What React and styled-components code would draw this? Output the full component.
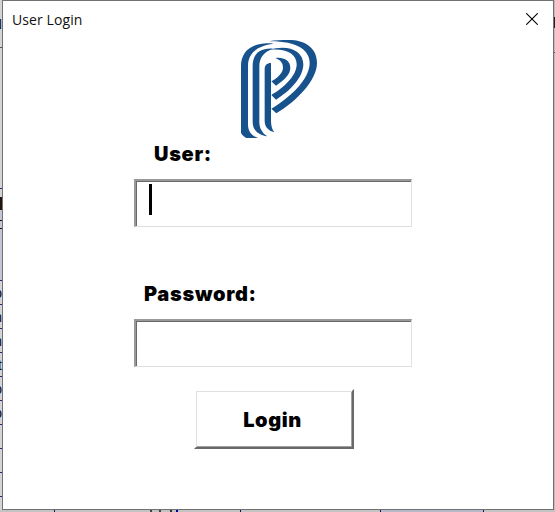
import React from "react";
import styled, { createGlobalStyle } from "styled-components";

const GlobalStyle = createGlobalStyle`
  * { box-sizing: border-box; }
  body { margin: 0; overflow: hidden; background: #d2d2d4; }
`;

const Desktop = styled.div`
  width: 555px;
  height: 512px;
  display: grid;
  grid-template-columns: 2px 552px 1px;
  grid-template-rows: 510px 2px;
  overflow: hidden;
  background: #c8c8c8;
`;

const SheetEdge = styled.div`
  display: flex;
  flex-direction: column;
  overflow: hidden;
  background: ${(p) => p.$tone || "#d3d3d8"};
`;

const SheetCell = styled.div`
  flex: 0 0 ${(p) => p.$h}px;
  display: flex;
  justify-content: flex-end;
  align-items: center;
  overflow: hidden;
  background: ${(p) => p.$bg || "transparent"};
  border-bottom: 1px solid ${(p) => p.$line || "#25257c"};
  font: 14px/20px "Liberation Sans", sans-serif;
  color: #111;
`;

const SheetFooter = styled.div`
  grid-column: 1 / -1;
  display: flex;
  overflow: hidden;
  background: #c3c3c4;
`;

const Column = styled.div`
  flex: 0 0 ${(p) => p.$w}px;
  background: ${(p) => p.$bg || "transparent"};
  border-right: ${(p) => p.$rule || 1}px solid ${(p) => p.$line || "#17174d"};
`;

const Window = styled.main`
  display: flex;
  flex-direction: column;
  background: #fff;
  border: 1px solid #717171;
`;

const TitleBar = styled.header`
  display: flex;
  align-items: center;
  justify-content: space-between;
  height: 38px;
  padding: 0 15px 0 9px;
`;

const Title = styled.h1`
  margin: 0;
  font: 400 14px/20px "Open Sans", sans-serif;
  letter-spacing: 0.1px;
  color: #111;
`;

const CloseButton = styled.button`
  display: flex;
  width: 12px;
  height: 12px;
  padding: 0;
  border: 0;
  background: none;
  margin-top: -2px;
`;

const Form = styled.form`
  display: flex;
  flex-direction: column;
  align-items: flex-start;
  padding-left: 131px;
`;

const Logo = styled.svg`
  display: block;
  width: 110px;
  height: 99px;
  margin-left: 91px;
`;

const Label = styled.label`
  height: 30px;
  margin: ${(p) => p.$top}px 0 10px ${(p) => p.$left}px;
  font: 900 20px/30px Inter, sans-serif;
  letter-spacing: 0.7px;
  color: #000;
`;

const Field = styled.div`
  width: 278px;
  height: 48px;
  padding: 3px 0 0 13px;
  border: 2px solid #999;
  border-right: 1px solid #e2e2e2;
  border-bottom: 1px solid #dedede;
  box-shadow: inset 1px 1px 0 #696969;
`;

const Caret = styled.div`
  width: 3px;
  height: 31px;
  background: #000;
`;

const LoginButton = styled.button`
  width: 160px;
  height: 60px;
  margin: 22px 0 0 60px;
  padding: 1px 3px 0 0;
  background: #fff;
  border: 2px solid #696969;
  border-top: 2px solid #fff;
  border-left: 2px solid #fff;
  box-shadow: inset 1px 1px 0 #e0e0e0, inset -1px -1px 0 #a0a0a0;
  font: 900 20px/30px Inter, sans-serif;
  letter-spacing: 0.6px;
  color: #000;
`;

const leftCells = [
  { h: 48, t: "N", line: "#555" },
  { h: 141 },
  { h: 8, line: "#d3d3d8" },
  { h: 13, bg: "#24140f", line: "#24140f" },
  { h: 11, bg: "#c3c6d6", line: "#111" },
  { h: 8, bg: "#c3c6d6", line: "#111" },
  { h: 52, bg: "#c3c6d6" },
  { h: 24, t: "o" },
  { h: 24, t: "n" },
  { h: 24, t: "n" },
  { h: 24, t: "t" },
  { h: 24, t: "o" },
  { h: 24, t: "o" },
  { h: 24 },
  { h: 24 },
  { h: 24 },
];

const columns = [
  { w: 55 },
  { w: 97, rule: 2, line: "#3b4743" },
  { w: 9, rule: 2, line: "#3b4743" },
  { w: 11, rule: 2, line: "#333" },
  { w: 6, rule: 2, line: "#00009b" },
  { w: 63 },
  { w: 140 },
  { w: 103, bg: "#b7b9c9" },
];

export default function App() {
  return (
    <>
      <GlobalStyle />
      <Desktop>
        <SheetEdge>
          {leftCells.map((c, i) => (
            <SheetCell key={i} $h={c.h} $bg={c.bg} $line={c.line}>
              {c.t}
            </SheetCell>
          ))}
        </SheetEdge>
        <Window>
          <TitleBar>
            <Title>User Login</Title>
            <CloseButton aria-label="Close">
              <svg width="12" height="12" viewBox="0 0 12 12" stroke="#000" strokeWidth="1.1">
                <path d="M.3 .3 11.7 11.7M11.7 .3 .3 11.7" />
              </svg>
            </CloseButton>
          </TitleBar>
          <Form>
            <Logo viewBox="0 27 330 297" fill="#17528d" aria-label="Company logo">
              <path d="M48 308V108C48 62 84 34 146 41C98 47 69 68 69 108V284C69 303 80 317 99 324H64C57 320 51 315 48 308Z" />
              <path d="M132 34C150 30 170 30 191 30C241 30 276 54 276 99C276 151 214 215 154 250L139 236C192 205 254 149 254 99C254 60 216 33 132 34Z" />
              <path d="M83 108C83 73 104 53 144 56C120 64 103 80 103 109V275C103 295 112 309 127 319C100 315 83 301 83 276Z" />
              <path d="M119 117C119 106 126 99 138 99V272C138 287 141 298 148 306C130 302 119 291 119 272Z" />
              <path d="M132 60C185 42 235 60 235 103C235 143 194 184 153 209L139 195C174 175 215 139 215 103C215 70 180 54 132 60Z" />
              <path d="M151 84C176 81 196 91 196 114C196 134 175 153 153 167L139 154C159 143 174 128 174 113C174 98 166 90 151 84Z" />
            </Logo>
            <Label $top={1} $left={20}>User:</Label>
            <Field><Caret /></Field>
            <Label $top={52} $left={10}>Password:</Label>
            <Field />
            <LoginButton type="button">Login</LoginButton>
          </Form>
        </Window>
        <SheetEdge $tone="#bdbdbd">
          <SheetCell $h={17} $line="#bdbdbd" />
          <SheetCell $h={11} $bg="#222" $line="#222" />
          <SheetCell $h={25} $line="#555" />
        </SheetEdge>
        <SheetFooter>
          {columns.map((c, i) => (
            <Column key={i} $w={c.w} $rule={c.rule} $line={c.line} $bg={c.bg} />
          ))}
        </SheetFooter>
      </Desktop>
    </>
  );
}
